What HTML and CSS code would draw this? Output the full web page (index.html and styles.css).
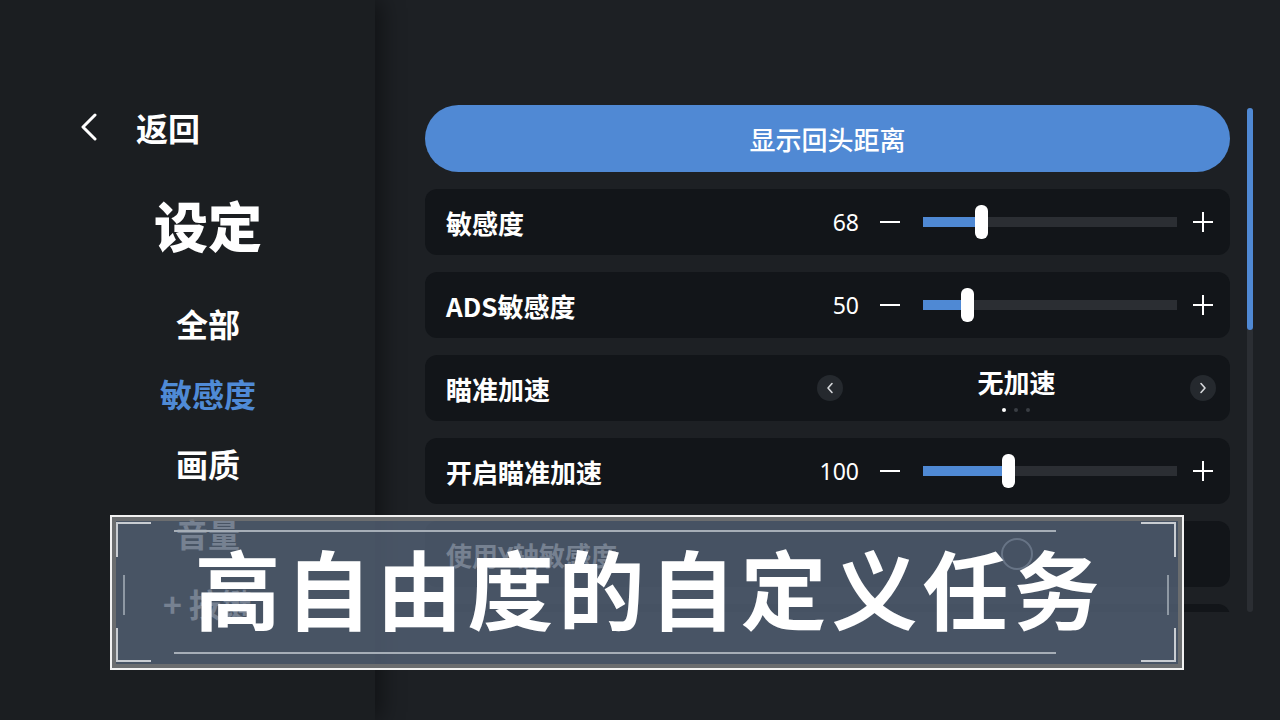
FILE: index.html
```html
<!DOCTYPE html>
<html lang="zh-CN">
<head>
  <meta charset="UTF-8">
  <title>设定</title>
  <link rel="stylesheet" href="styles.css">
</head>
<body>

  <div class="screen">
    <aside class="sidebar">
      <div class="back">
        <svg class="back-icon" width="18" height="28" viewBox="0 0 18 28"><path d="M15 2 L3 14 L15 26" fill="none" stroke="#fff" stroke-width="3" stroke-linecap="round" stroke-linejoin="round"/></svg>
        <span>返回</span>
      </div>
      <h1 class="title">设定</h1>
      <ul class="menu">
        <li>全部</li>
        <li class="active">敏感度</li>
        <li>画质</li>
        <li>音量</li>
        <li>+ 按键</li>
      </ul>
    </aside>

    <main class="content">
      <div class="list">
        <button class="pill">显示回头距离</button>

        <div class="row">
          <span class="label">敏感度</span>
          <div class="slider">
            <span class="value">68</span>
            <span class="minus"></span>
            <div class="track"><div class="fill" style="width: 23%"></div><div class="thumb" style="left: 23%"></div></div>
            <span class="plus"></span>
          </div>
        </div>

        <div class="row">
          <span class="label">ADS敏感度</span>
          <div class="slider">
            <span class="value">50</span>
            <span class="minus"></span>
            <div class="track"><div class="fill" style="width: 17.3%"></div><div class="thumb" style="left: 17.3%"></div></div>
            <span class="plus"></span>
          </div>
        </div>

        <div class="row">
          <span class="label">瞄准加速</span>
          <div class="picker">
            <span class="arrow"><svg width="10" height="12" viewBox="0 0 10 12"><path d="M7 1.5 L3 6 L7 10.5" fill="none" stroke="#d6d8db" stroke-width="1.6" stroke-linecap="round" stroke-linejoin="round"/></svg></span>
            <div class="choice">
              <span class="choice-text">无加速</span>
              <div class="dots"><i class="on"></i><i></i><i></i></div>
            </div>
            <span class="arrow"><svg width="10" height="12" viewBox="0 0 10 12"><path d="M3 1.5 L7 6 L3 10.5" fill="none" stroke="#d6d8db" stroke-width="1.6" stroke-linecap="round" stroke-linejoin="round"/></svg></span>
          </div>
        </div>

        <div class="row">
          <span class="label">开启瞄准加速</span>
          <div class="slider">
            <span class="value">100</span>
            <span class="minus"></span>
            <div class="track"><div class="fill" style="width: 33.5%"></div><div class="thumb" style="left: 33.5%"></div></div>
            <span class="plus"></span>
          </div>
        </div>

        <div class="row">
          <span class="label">使用Y轴敏感度</span>
          <div class="toggle"><span class="ring"></span></div>
        </div>

        <div class="row">
          <span class="label">Y轴敏感度</span>
        </div>
      </div>

      <div class="scrollbar"><div class="scroll-thumb"></div></div>
    </main>

    <div class="banner">
      <div class="banner-inner">
        <svg class="frame" width="1074" height="155" viewBox="0 0 1074 155">
          <path d="M41 8 H7 V42 M7 113 V146 H41 M1031 8 H1065 V42 M1065 113 V146 H1031" fill="none" stroke="#c9cdd2" stroke-width="2"/>
          <path d="M14 60 V100 M1058 60 V100" stroke="#8f99a4" stroke-width="2"/>
          <path d="M64 16 H946 M64 138 H946" stroke="#a6aeb7" stroke-width="2"/>
        </svg>
        <span class="banner-text">高自由度的自定义任务</span>
      </div>
    </div>
  </div>

</body>
</html>
```

FILE: styles.css
```css
* {
  box-sizing: border-box;
  margin: 0;
  padding: 0;
}

body {
  background-color: #1d2024;
  font-family: "Noto Sans", "Noto Sans CJK SC", sans-serif;
  color: #fff;
  width: 1280px;
  height: 720px;
  overflow: hidden;
}

.screen {
  position: relative;
  display: flex;
  width: 1280px;
  height: 720px;
}

/* left column */
.sidebar {
  width: 375px;
  height: 720px;
  background-color: #1b1e21;
  box-shadow: 6px 0 22px rgba(0, 0, 0, 0.45);
  padding-top: 110px;
  position: relative;
  z-index: 1;
}

.back {
  display: flex;
  align-items: center;
  gap: 38px;
  margin-left: 80px;
  height: 34px;
  font-family: "Noto Sans CJK SC", sans-serif;
  font-size: 32px;
  font-weight: 700;
}

.title {
  margin-top: 46px;
  padding-left: 41px;
  text-align: center;
  line-height: 70px;
  font-family: "Noto Sans CJK SC", sans-serif;
  font-size: 54px;
  font-weight: 900;
}

.menu {
  list-style: none;
  margin-top: 28px;
  padding-left: 41px;
  text-align: center;
  font-family: "Noto Sans CJK SC", sans-serif;
  font-size: 32px;
  font-weight: 700;
}

.menu li {
  line-height: 70px;
}

.menu li.active {
  color: #4f8ad6;
}

/* right column */
.content {
  flex: 1;
  display: flex;
  padding: 105px 0 0 50px;
}

.list {
  width: 805px;
  height: 507px;
  overflow: hidden;
  display: flex;
  flex-direction: column;
  gap: 17px;
}

.pill {
  flex: none;
  height: 67px;
  border: none;
  border-radius: 34px;
  background-color: #5089d4;
  color: #fff;
  font-family: "Noto Sans CJK SC", sans-serif;
  font-size: 26px;
  font-weight: 500;
}

.row {
  flex: none;
  display: flex;
  align-items: center;
  height: 66px;
  padding: 0 14px 0 21px;
  background-color: #121519;
  border-radius: 12px;
}

.label {
  flex: 1;
  font-family: "Noto Sans CJK SC", sans-serif;
  font-size: 26px;
  font-weight: 700;
}

.slider {
  display: flex;
  align-items: center;
  padding-right: 3px;
}

.value {
  width: 60px;
  text-align: right;
  font-size: 23px;
  margin-right: 21px;
}

.minus {
  width: 20px;
  height: 2px;
  background-color: #fff;
  margin-right: 23px;
}

.plus {
  position: relative;
  width: 20px;
  height: 20px;
  margin-left: 16px;
}

.plus::before,
.plus::after {
  content: "";
  position: absolute;
  background-color: #fff;
}

.plus::before {
  left: 0;
  top: 9px;
  width: 20px;
  height: 2px;
}

.plus::after {
  left: 9px;
  top: 0;
  width: 2px;
  height: 20px;
}

.track {
  position: relative;
  width: 254px;
  height: 10px;
  background-color: #2b2e33;
}

.fill {
  height: 10px;
  background-color: #4f89d4;
}

.thumb {
  position: absolute;
  top: -12px;
  width: 13px;
  height: 34px;
  margin-left: -6px;
  background-color: #fff;
  border-radius: 6px;
}

.picker {
  display: flex;
  align-items: center;
  justify-content: space-between;
  width: 399px;
}

.arrow {
  display: flex;
  align-items: center;
  justify-content: center;
  width: 26px;
  height: 26px;
  border-radius: 50%;
  background-color: #25292e;
}

.choice {
  display: flex;
  flex-direction: column;
  align-items: center;
  margin-top: 2px;
}

.choice-text {
  font-family: "Noto Sans CJK SC", sans-serif;
  font-size: 26px;
  font-weight: 700;
  line-height: 32px;
}

.dots {
  display: flex;
  gap: 8px;
  margin-top: 10px;
}

.dots i {
  width: 4px;
  height: 4px;
  border-radius: 50%;
  background-color: #3a3e44;
}

.dots i.on {
  background-color: #fff;
}

.toggle {
  width: 399px;
  display: flex;
  justify-content: center;
}

.ring {
  width: 32px;
  height: 32px;
  border-radius: 50%;
  border: 2px solid #b4bcc6;
}

.scrollbar {
  width: 6px;
  height: 504px;
  margin: 3px 0 0 17px;
  background-color: #2b2e33;
  border-radius: 3px;
}

.scroll-thumb {
  height: 222px;
  background-color: #5089d4;
  border-radius: 3px;
}

/* caption banner over the page */
.banner {
  position: absolute;
  left: 110px;
  top: 515px;
  width: 1074px;
  height: 155px;
  border: 2px solid #f2f2f2;
  z-index: 2;
}

.banner-inner {
  width: 100%;
  height: 100%;
  border: 4px solid rgba(112, 114, 116, 0.95);
  background-color: rgba(84, 98, 118, 0.8);
  background-clip: padding-box;
  display: flex;
  align-items: center;
  justify-content: center;
}

.frame {
  position: absolute;
  left: -2px;
  top: -2px;
}

.banner-text {
  position: relative;
  top: -6px;
  font-family: "Noto Sans CJK SC", sans-serif;
  font-size: 86px;
  font-weight: 700;
  letter-spacing: 5px;
  margin-left: 5px;
  line-height: 1;
  color: #fff;
}
```
